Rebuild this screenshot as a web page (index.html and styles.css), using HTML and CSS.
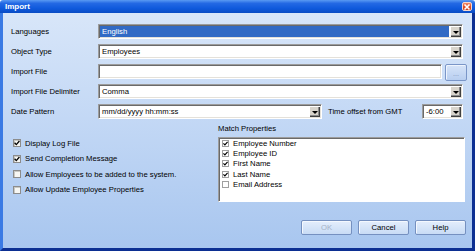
FILE: index.html
```html
<!DOCTYPE html>
<html lang="en">
<head>
    <meta charset="UTF-8">
    <title>Import</title>
    <link rel="stylesheet" href="styles.css">
</head>
<body>
    <div class="window">
        <!-- Title bar -->
        <div class="titlebar">
            <span class="title">Import</span>
            <span class="close">
                <svg width="8" height="8" viewBox="0 0 8 8"><path d="M1.5 1.5 L6.5 6.5 M6.5 1.5 L1.5 6.5" stroke="#fff" stroke-width="1.6"/></svg>
            </span>
        </div>

        <div class="frame">
            <!-- Main fields -->
            <div class="fields">
                <span class="field-label">Languages</span>
                <div class="combo">
                    <span class="value selected">English</span>
                    <span class="drop"></span>
                </div>

                <span class="field-label">Object Type</span>
                <div class="combo">
                    <span class="value">Employees</span>
                    <span class="drop"></span>
                </div>

                <span class="field-label">Import File</span>
                <div class="file-row">
                    <div class="textbox"></div>
                    <button class="browse">...</button>
                </div>

                <span class="field-label">Import File Delimiter</span>
                <div class="combo">
                    <span class="value">Comma</span>
                    <span class="drop"></span>
                </div>

                <span class="field-label">Date Pattern</span>
                <div class="date-row">
                    <div class="combo date-combo">
                        <span class="value">mm/dd/yyyy hh:mm:ss</span>
                        <span class="drop"></span>
                    </div>
                    <span class="offset-label">Time offset from GMT</span>
                    <div class="combo gmt-combo">
                        <span class="value">-6:00</span>
                        <span class="drop"></span>
                    </div>
                </div>
            </div>

            <!-- Options and match properties -->
            <div class="lower">
                <div class="options">
                    <div class="option">
                        <span class="box"><svg width="6" height="6" viewBox="0 0 6 6"><path d="M0.6 2.8 L2.3 4.6 L5.4 1" stroke="#000" stroke-width="1.3" fill="none"/></svg></span>
                        Display Log File
                    </div>
                    <div class="option">
                        <span class="box"><svg width="6" height="6" viewBox="0 0 6 6"><path d="M0.6 2.8 L2.3 4.6 L5.4 1" stroke="#000" stroke-width="1.3" fill="none"/></svg></span>
                        Send Completion Message
                    </div>
                    <div class="option">
                        <span class="box"></span>
                        Allow Employees to be added to the system.
                    </div>
                    <div class="option">
                        <span class="box"></span>
                        Allow Update Employee Properties
                    </div>
                </div>

                <div class="match">
                    <div class="match-label">Match Properties</div>
                    <div class="list">
                        <div class="list-item">
                            <span class="mini-box"><svg width="5" height="5" viewBox="0 0 5 5"><path d="M0.4 2.3 L1.9 3.9 L4.6 0.9" stroke="#000" stroke-width="1.2" fill="none"/></svg></span>
                            Employee Number
                        </div>
                        <div class="list-item">
                            <span class="mini-box"><svg width="5" height="5" viewBox="0 0 5 5"><path d="M0.4 2.3 L1.9 3.9 L4.6 0.9" stroke="#000" stroke-width="1.2" fill="none"/></svg></span>
                            Employee ID
                        </div>
                        <div class="list-item">
                            <span class="mini-box"><svg width="5" height="5" viewBox="0 0 5 5"><path d="M0.4 2.3 L1.9 3.9 L4.6 0.9" stroke="#000" stroke-width="1.2" fill="none"/></svg></span>
                            First Name
                        </div>
                        <div class="list-item">
                            <span class="mini-box"><svg width="5" height="5" viewBox="0 0 5 5"><path d="M0.4 2.3 L1.9 3.9 L4.6 0.9" stroke="#000" stroke-width="1.2" fill="none"/></svg></span>
                            Last Name
                        </div>
                        <div class="list-item">
                            <span class="mini-box"></span>
                            Email Address
                        </div>
                    </div>
                </div>
            </div>

            <!-- Dialog buttons -->
            <div class="actions">
                <button class="btn" disabled>OK</button>
                <button class="btn">Cancel</button>
                <button class="btn">Help</button>
            </div>
        </div>
    </div>
</body>
</html>
```

FILE: styles.css
```css
body {
    margin: 0;
    font-family: "Liberation Sans", Arial, sans-serif;
    font-size: 7.7px;
    color: #000;
    background: #fff;
}
.window {
    width: 475px;
    height: 251px;
    display: flex;
    flex-direction: column;
    box-sizing: border-box;
}
/* Title bar */
.titlebar {
    height: 13px;
    flex-shrink: 0;
    display: flex;
    align-items: center;
    justify-content: space-between;
    padding: 0 3px 0 5px;
    background: linear-gradient(#5a9af3, #2469e4 25%, #0f59dc 65%, #0a4cc4);
    border-radius: 3px 3px 0 0;
}
.title {
    color: #fff;
    font-weight: bold;
    font-size: 8px;
}
.close {
    width: 10px;
    height: 9px;
    display: flex;
    align-items: center;
    justify-content: center;
    background: linear-gradient(#f08a6a, #e0502a 50%, #c8401e);
    border: 1px solid #f6d8cc;
    border-radius: 2px;
    box-sizing: border-box;
}
/* Dialog body */
.frame {
    flex: 1;
    display: flex;
    flex-direction: column;
    border-left: 3px solid #3a7ae4;
    border-right: 3px solid #0c2f92;
    border-bottom: 3px solid #0c2f92;
    padding: 11px 9px 13px 8px;
    background: linear-gradient(#d8e6f9, #c3d8f5 45%, #a8c6ef);
}
.fields {
    display: grid;
    grid-template-columns: 87px 1fr;
    grid-auto-rows: 15px;
    row-gap: 5px;
    align-items: center;
}
.combo,
.textbox {
    height: 15px;
    box-sizing: border-box;
    display: flex;
    align-items: center;
    background: #fff;
    border: 1px solid;
    border-color: #9c9c9c #fff #fff #9c9c9c;
    box-shadow: inset 1px 1px #6a6a6a, inset -1px -1px #e4e1da;
}
.value {
    flex: 1;
    align-self: stretch;
    display: flex;
    align-items: center;
    padding-left: 2px;
    margin: 1px;
    white-space: nowrap;
}
.value.selected {
    background: #316ac5;
    color: #fff;
}
.drop {
    width: 11px;
    height: 11px;
    flex-shrink: 0;
    margin-right: 1px;
    display: flex;
    align-items: center;
    justify-content: center;
    background: #d8d4cc;
    box-shadow: inset 1px 1px #fff, inset -1px -1px #404040, inset -2px -2px #8a8a8a;
}
.drop::after {
    content: "";
    border-top: 3px solid #000;
    border-left: 3px solid transparent;
    border-right: 3px solid transparent;
    margin-top: 1px;
}
.file-row {
    display: flex;
    align-items: flex-start;
    gap: 3px;
    margin-right: -4px;
    align-self: start;
}
.textbox {
    flex: 1;
}
.browse {
    width: 22px;
    height: 17px;
    padding: 0 0 3px;
    font-family: inherit;
    font-size: 7px;
    color: #7890b8;
    display: flex;
    align-items: flex-end;
    justify-content: center;
    background: linear-gradient(#d6e4f8, #b8cef0);
    border: 1px solid #7a96c8;
    border-radius: 2px;
    box-shadow: inset 1px 1px #eef4fd;
}
.date-row {
    display: flex;
    align-items: center;
}
.date-combo {
    width: 224px;
}
.offset-label {
    margin-left: 6px;
}
.gmt-combo {
    width: 41px;
    margin-left: auto;
}
/* Lower area */
.lower {
    display: grid;
    grid-template-columns: 207px 1fr;
    margin-top: 5px;
}
.options {
    padding: 11.5px 0 0 2px;
}
.option {
    height: 15.5px;
    display: flex;
    align-items: center;
    gap: 4px;
}
.box {
    width: 8px;
    height: 8px;
    box-sizing: border-box;
    display: flex;
    align-items: center;
    justify-content: center;
    background: #f7f7f4;
    border: 1px solid #8c8c8c;
    box-shadow: inset 1px 1px #c8c8c4;
}
.match-label {
    line-height: 10px;
    margin-bottom: 3px;
}
.list {
    height: 65px;
    margin-right: -2px;
    box-sizing: border-box;
    padding: 0 0 0 3px;
    background: #fff;
    border: 1px solid;
    border-color: #9c9c9c #fff #fff #9c9c9c;
    box-shadow: inset 1px 1px #6a6a6a;
}
.list-item {
    height: 10.3px;
    display: flex;
    align-items: center;
    gap: 4px;
}
.mini-box {
    width: 7px;
    height: 7px;
    box-sizing: border-box;
    display: flex;
    align-items: center;
    justify-content: center;
    background: #fff;
    border: 1px solid #a0a0a0;
}
/* Buttons */
.actions {
    margin-top: auto;
    margin-right: -3px;
    display: flex;
    justify-content: flex-end;
    gap: 6px;
}
.btn {
    width: 51px;
    height: 15px;
    padding: 0;
    font-family: inherit;
    font-size: 7.7px;
    color: #000;
    background: linear-gradient(#e4eefc, #c8dbf5);
    border: 1px solid #7590c0;
    border-radius: 2px;
    box-shadow: inset 1px 1px #f4f8fe;
}
.btn:disabled {
    color: #a6b2c6;
}
```
